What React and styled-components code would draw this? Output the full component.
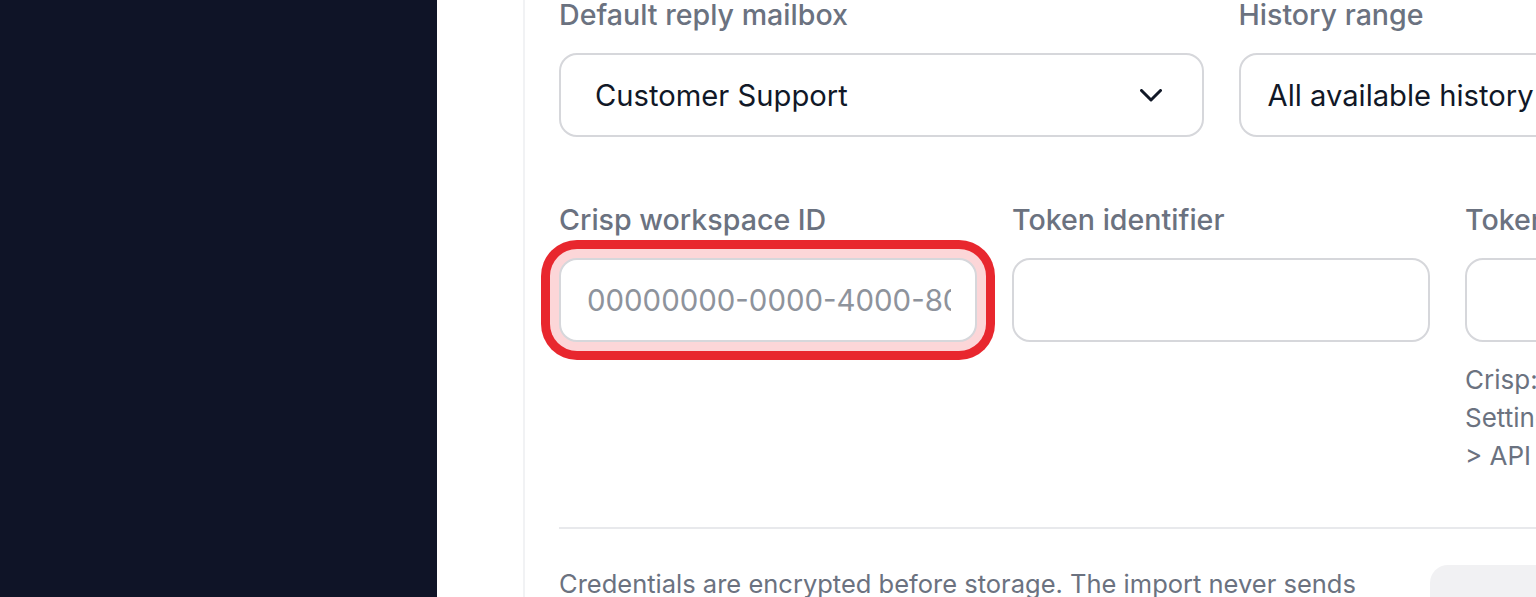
import React from "react";
import styled, { createGlobalStyle, css } from "styled-components";

const GlobalStyle = createGlobalStyle`
  html, body {
    margin: 0;
    padding: 0;
    background: #ffffff;
    overflow: hidden;
    font-family: Inter, "Noto Sans", "Liberation Sans", sans-serif;
  }
  * { box-sizing: border-box; }
`;

const Shell = styled.div`
  display: flex;
  height: 597px;
  width: 100vw;
  overflow: hidden;
`;

const Sidebar = styled.aside`
  flex: 0 0 437px;
  background: #0f1427;
`;

const Main = styled.main`
  flex: 1;
  min-width: 0;
  padding-left: 86px;
  overflow: hidden;
`;

const Card = styled.section`
  width: 1400px;
  height: 100%;
  border-left: 2px solid #f1f2f4;
  padding-left: 34px;
`;

const Form = styled.div`
  width: 1324px;
  display: flex;
  flex-direction: column;
`;

const Row = styled.div`
  display: grid;
  grid-template-columns: repeat(${(p) => p.$cols}, 1fr);
  column-gap: 35px;
  margin-bottom: ${(p) => p.$gapAfter || 0}px;
`;

const Field = styled.div`
  display: flex;
  flex-direction: column;
  min-width: 0;
`;

const Label = styled.label`
  font-size: 28.6px;
  line-height: 32px;
  font-weight: 500;
  color: #6b7280;
  margin-bottom: 22px;
  margin-top: -1px;
  white-space: nowrap;
`;

const SelectBox = styled.div`
  height: 84px;
  border: 2px solid #d6d7db;
  border-radius: 18px;
  padding: 0 40px 0 ${(p) => p.$padLeft}px;
  display: flex;
  align-items: center;
  justify-content: space-between;
  font-size: 29.2px;
  color: #111827;
  background: #fff;
  white-space: nowrap;
  overflow: hidden;
`;

const Input = styled.input`
  height: 84px;
  width: 100%;
  border: 2px solid #d6d7db;
  border-radius: 18px;
  padding: 0 24px 0 26px;
  font-family: inherit;
  font-size: 29.4px;
  color: #111827;
  background: #fff;
  outline: none;
  &::placeholder {
    color: #8e939c;
  }
  ${(p) =>
    p.$highlight &&
    css`
      box-shadow: 0 0 0 9px #fcd6d8, 0 0 0 18px #e8272e;
    `}
`;

const Help = styled.p`
  margin: 19px 0 0;
  font-size: 26px;
  line-height: 38px;
  color: #6b7280;
`;

const Divider = styled.hr`
  margin: 52px 0 0;
  border: 0;
  height: 2px;
  background: #e8e9ec;
`;

const Footer = styled.div`
  display: flex;
  align-items: flex-start;
  gap: 36px;
  padding-top: 36px;
`;

const FooterText = styled.p`
  flex: 0 0 835px;
  margin: 0;
  font-size: 25.5px;
  line-height: 38px;
  color: #6b7280;
`;

const Button = styled.button`
  height: 84px;
  padding: 4px 38px 0;
  border: 0;
  border-radius: 18px;
  background: #f1f1f3;
  color: #6b6f76;
  font-family: inherit;
  font-size: 28px;
  font-weight: 600;
`;

const Chevron = () => (
  <svg width="22" height="13" viewBox="0 0 22 13" fill="none">
    <path
      d="M1.5 1.5 L11 11 L20.5 1.5"
      stroke="#111827"
      strokeWidth="3"
      strokeLinecap="round"
      strokeLinejoin="round"
    />
  </svg>
);

export default function App() {
  return (
    <>
      <GlobalStyle />
      <Shell>
        <Sidebar />
        <Main>
          <Card>
            <Form>
              <Row $cols={2} $gapAfter={68}>
                <Field>
                  <Label>Default reply mailbox</Label>
                  <SelectBox $padLeft={34}>
                    <span>Customer Support</span>
                    <Chevron />
                  </SelectBox>
                </Field>
                <Field>
                  <Label>History range</Label>
                  <SelectBox $padLeft={27}>
                    <span>All available history</span>
                    <Chevron />
                  </SelectBox>
                </Field>
              </Row>
              <Row $cols={3}>
                <Field>
                  <Label>Crisp workspace ID</Label>
                  <Input
                    $highlight
                    placeholder="00000000-0000-4000-8000-000000000000"
                  />
                </Field>
                <Field>
                  <Label>Token identifier</Label>
                  <Input />
                </Field>
                <Field>
                  <Label>Token key</Label>
                  <Input type="password" />
                  <Help>
                    Crisp: Marketplace dashboard → Settings → Production tokens
                    &gt;{"\u00a0"}API token
                  </Help>
                </Field>
              </Row>
              <Divider />
              <Footer>
                <FooterText>
                  Credentials are encrypted before storage. The import never sends
                  messages to your customers and can be run again safely.
                </FooterText>
                <Button disabled>Start import</Button>
              </Footer>
            </Form>
          </Card>
        </Main>
      </Shell>
    </>
  );
}
